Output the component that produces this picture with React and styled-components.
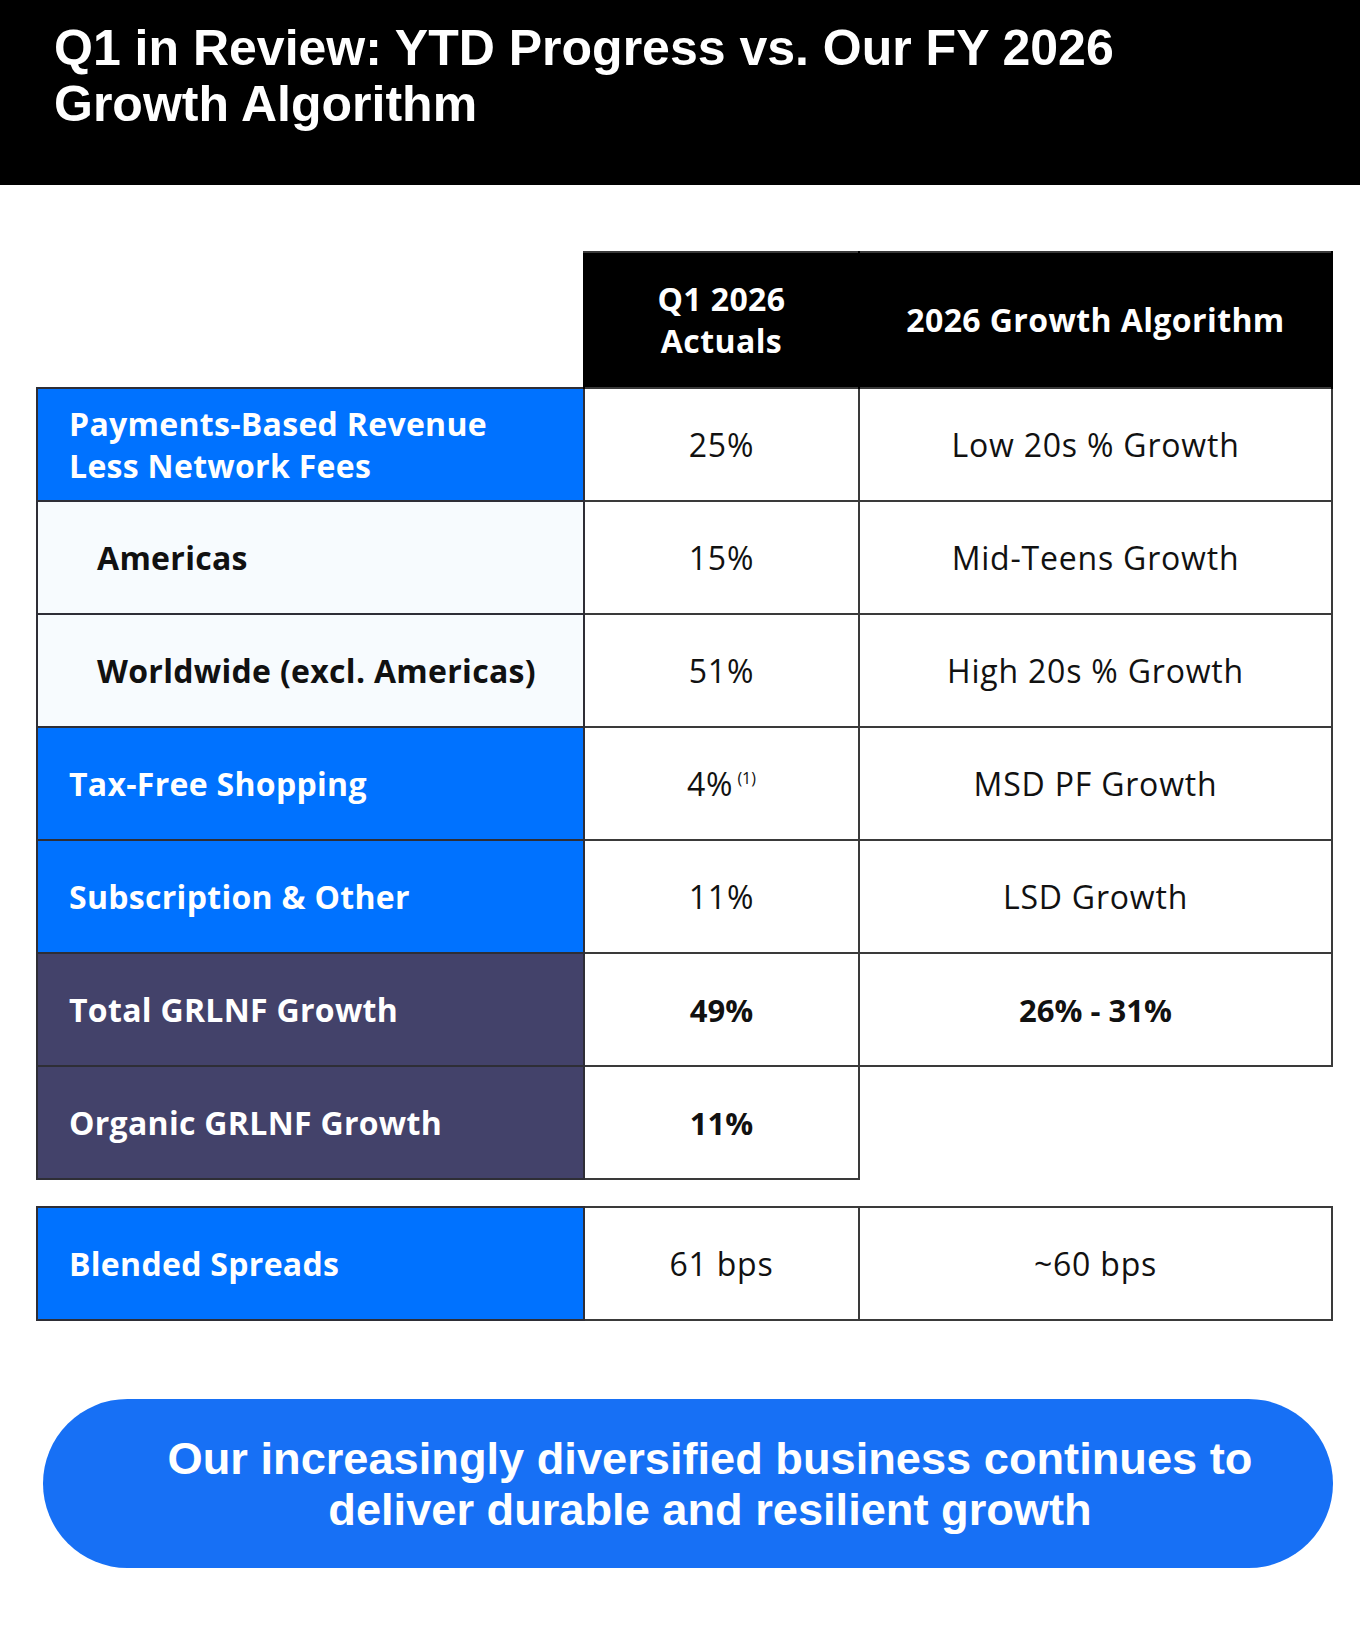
import React from 'react';
import styled, { createGlobalStyle } from 'styled-components';

const GlobalStyle = createGlobalStyle`
  body {
    margin: 0;
    background: #ffffff;
  }
`;

const Page = styled.div`
  width: 1360px;
  min-height: 1634px;
  background: #ffffff;
`;

const Header = styled.header`
  height: 185px;
  box-sizing: border-box;
  background: #000000;
  padding: 20px 0 0 54px;
`;

const Title = styled.h1`
  margin: 0;
  color: #ffffff;
  font-family: 'Liberation Sans', Arial, sans-serif;
  font-weight: 700;
  font-size: 50px;
  line-height: 56px;
`;

const Body = styled.main`
  padding: 66px 29px 0 36px;
`;

const Table = styled.table`
  border-collapse: collapse;
  table-layout: fixed;
  width: 1295px;
  font-family: 'Open Sans', 'Noto Sans', sans-serif;
  margin-top: ${props => props.gap || 0}px;
`;

const Col = styled.col`
  width: ${props => props.w}px;
`;

const Blank = styled.td`
  padding: 0;
  border: none;
`;

const HeadCell = styled.th`
  height: 134px;
  background: #000000;
  color: #ffffff;
  font-size: 32px;
  font-weight: 700;
  line-height: 42px;
  letter-spacing: 0.4px;
  text-align: center;
  border-top: 2px solid #3a3a3a;
  border-left: 2px solid ${props => (props.divider ? '#c8c8c8' : '#000000')};
  border-right: 2px solid #000000;
  padding: 0 6px;
`;

const Label = styled.td`
  height: 113px;
  box-sizing: border-box;
  border: 2px solid #2e2e36;
  padding: 0 10px 0 ${props => (props.indent ? 59 : 31)}px;
  font-size: 32px;
  font-weight: 700;
  line-height: 42px;
  letter-spacing: 0.3px;
  white-space: nowrap;
  background: ${props =>
    props.tone === 'dark' ? '#43426a' : props.tone === 'light' ? '#f7fbfe' : '#0072ff'};
  color: ${props => (props.tone === 'light' ? '#111111' : '#ffffff')};
`;

const Value = styled.td`
  border: 2px solid #3a3a3a;
  background: #ffffff;
  text-align: center;
  color: #111111;
  font-size: ${props => (props.bold ? 31 : 32)}px;
  font-weight: ${props => (props.bold ? 700 : 400)};
  letter-spacing: ${props => (props.bold ? 0 : 0.8)}px;
  padding: 0 6px;
`;

const Note = styled.sup`
  font-size: 16px;
  vertical-align: 12px;
  margin-left: 4px;
  letter-spacing: 0;
  line-height: 0;
`;

const Pill = styled.div`
  margin: 78px 0 0 43px;
  width: 1290px;
  height: 169px;
  box-sizing: border-box;
  border-radius: 86px;
  background: #1770f5;
  display: flex;
  align-items: center;
  justify-content: center;
  padding-left: 44px;
`;

const PillText = styled.p`
  margin: 0;
  color: #ffffff;
  font-family: 'Liberation Sans', Arial, sans-serif;
  font-weight: 700;
  font-size: 45.2px;
  line-height: 51px;
  text-align: center;
`;

const rows = [
  { label: ['Payments-Based Revenue', 'Less Network Fees'], q1: '25%', algo: 'Low 20s % Growth' },
  { label: ['Americas'], tone: 'light', indent: true, q1: '15%', algo: 'Mid-Teens Growth' },
  { label: ['Worldwide (excl. Americas)'], tone: 'light', indent: true, q1: '51%', algo: 'High 20s % Growth' },
  { label: ['Tax-Free Shopping'], q1: '4%', note: '(1)', algo: 'MSD PF Growth' },
  { label: ['Subscription & Other'], q1: '11%', algo: 'LSD Growth' },
  { label: ['Total GRLNF Growth'], tone: 'dark', bold: true, q1: '49%', algo: '26% - 31%' },
  { label: ['Organic GRLNF Growth'], tone: 'dark', bold: true, q1: '11%' },
];

function Columns() {
  return (
    <colgroup>
      <Col w={547} />
      <Col w={275} />
      <Col w={473} />
    </colgroup>
  );
}

export default function App() {
  return (
    <Page>
      <GlobalStyle />
      <Header>
        <Title>
          Q1 in Review: YTD Progress vs. Our FY 2026
          <br />
          Growth Algorithm
        </Title>
      </Header>
      <Body>
        <Table>
          <Columns />
          <thead>
            <tr>
              <Blank />
              <HeadCell>
                Q1 2026
                <br />
                Actuals
              </HeadCell>
              <HeadCell divider>2026 Growth Algorithm</HeadCell>
            </tr>
          </thead>
          <tbody>
            {rows.map((row, i) => (
              <tr key={i}>
                <Label tone={row.tone} indent={row.indent}>
                  {row.label.map((line, j) => (
                    <React.Fragment key={j}>
                      {j > 0 && <br />}
                      {line}
                    </React.Fragment>
                  ))}
                </Label>
                <Value bold={row.bold}>
                  {row.q1}
                  {row.note && <Note>{row.note}</Note>}
                </Value>
                {row.algo ? <Value bold={row.bold}>{row.algo}</Value> : <Blank />}
              </tr>
            ))}
          </tbody>
        </Table>
        <Table gap={26}>
          <Columns />
          <tbody>
            <tr>
              <Label>Blended Spreads</Label>
              <Value>61 bps</Value>
              <Value>~60 bps</Value>
            </tr>
          </tbody>
        </Table>
      </Body>
      <Pill>
        <PillText>
          Our increasingly diversified business continues to
          <br />
          deliver durable and resilient growth
        </PillText>
      </Pill>
    </Page>
  );
}
